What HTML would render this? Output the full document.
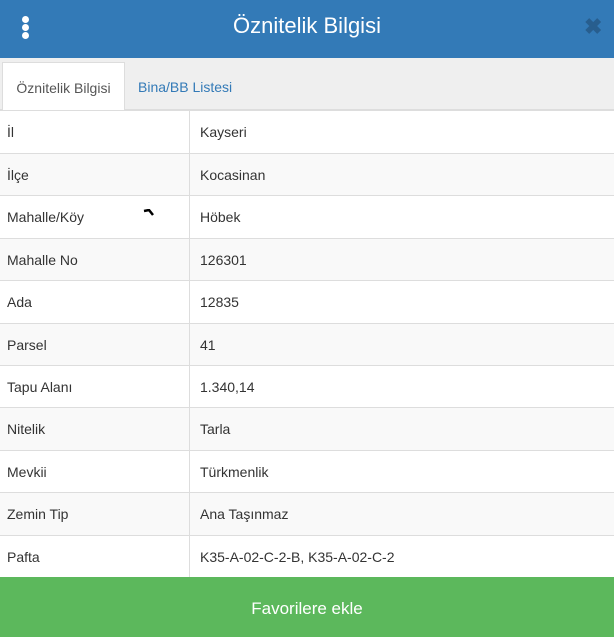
<!DOCTYPE html><html><head><style>
body{margin:0;width:614px;height:637px;overflow:hidden;font-family:"Liberation Sans",Arial,sans-serif;color:#333;background:#fff;position:relative}
.hd{position:absolute;left:0;top:0;width:614px;height:58px;background:#337ab7}
.hd .t{position:absolute;left:0;right:0;top:13px;text-align:center;color:#fff;font-size:22px}
.dots{position:absolute;left:22px;top:16px;width:7px}
.dots i{display:block;width:7px;height:7px;border-radius:50%;background:#fff;margin-bottom:1px}
.x{position:absolute;left:584px;top:17px;font-size:22px;font-weight:bold;color:#285e8e;line-height:20px}
.tabs{position:absolute;top:58px;left:0;width:614px;height:51px;background:#efefef;border-bottom:2px solid #ddd}
.tab{position:absolute;top:4px;height:48px;font-size:14px;line-height:50px}
.a{left:2px;width:121px;background:#fff;border:1px solid #ddd;border-bottom:none;text-align:center;color:#555}
.b{left:138px;color:#337ab7}
.r{position:absolute;left:0;width:614px;border-top:1px solid #ddd;font-size:14px}
.r.g{background:#f9f9f9}
.r span{position:absolute;top:13px}
.r .v{left:200px}.r .k{left:7px}
.r:after{content:"";position:absolute;left:189px;top:0;bottom:0;border-left:1px solid #ddd}
.btn{position:absolute;left:0;top:577px;width:614px;height:60px;background:#5cb85c;color:#fff;text-align:center;line-height:64px;font-size:17px}
</style></head><body>
<div class="hd"><div class="dots"><i></i><i></i><i></i></div><div class="t">Öznitelik Bilgisi</div><div class="x">✖</div></div>
<div class="tabs"><div class="tab a">Öznitelik Bilgisi</div><div class="tab b">Bina/BB Listesi</div></div>
<div class="r" style="top:110px;height:43px"><span class="k">İl</span><span class="v">Kayseri</span></div>
<div class="r g" style="top:153px;height:42px"><span class="k">İlçe</span><span class="v">Kocasinan</span></div>
<div class="r" style="top:195px;height:43px"><span class="k">Mahalle/Köy</span><span class="v">Höbek</span><svg style="position:absolute;left:143px;top:13px" width="12" height="8"><path d="M1 2 L6 1 L10 6" stroke="#000" stroke-width="2.5" fill="none"/></svg></div>
<div class="r g" style="top:238px;height:42px"><span class="k">Mahalle No</span><span class="v">126301</span></div>
<div class="r" style="top:280px;height:43px"><span class="k">Ada</span><span class="v">12835</span></div>
<div class="r g" style="top:323px;height:42px"><span class="k">Parsel</span><span class="v">41</span></div>
<div class="r" style="top:365px;height:42px"><span class="k">Tapu Alanı</span><span class="v">1.340,14</span></div>
<div class="r g" style="top:407px;height:43px"><span class="k">Nitelik</span><span class="v">Tarla</span></div>
<div class="r" style="top:450px;height:42px"><span class="k">Mevkii</span><span class="v">Türkmenlik</span></div>
<div class="r g" style="top:492px;height:43px"><span class="k">Zemin Tip</span><span class="v">Ana Taşınmaz</span></div>
<div class="r" style="top:535px;height:42px"><span class="k">Pafta</span><span class="v">K35-A-02-C-2-B, K35-A-02-C-2</span></div>
<div class="btn">Favorilere ekle</div>
</body></html>
